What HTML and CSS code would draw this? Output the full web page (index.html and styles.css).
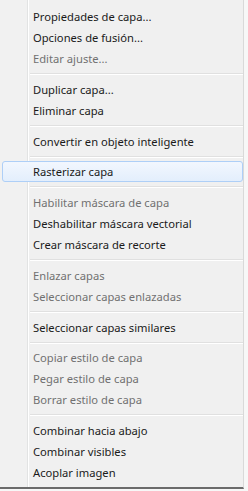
FILE: index.html
```html
<!DOCTYPE html>
<html lang="es">
<head>
<meta charset="utf-8">
<title>Menú contextual de capa</title>
<link rel="stylesheet" href="styles.css">
</head>
<body>
<div class="menu">
  <div class="item">Propiedades de capa...</div>
  <div class="item">Opciones de fusión...</div>
  <div class="item disabled">Editar ajuste...</div>
  <div class="sep"></div>
  <div class="item">Duplicar capa...</div>
  <div class="item">Eliminar capa</div>
  <div class="sep"></div>
  <div class="item">Convertir en objeto inteligente</div>
  <div class="sep"></div>
  <div class="item hover">Rasterizar capa</div>
  <div class="sep"></div>
  <div class="item disabled">Habilitar máscara de capa</div>
  <div class="item">Deshabilitar máscara vectorial</div>
  <div class="item">Crear máscara de recorte</div>
  <div class="sep"></div>
  <div class="item disabled">Enlazar capas</div>
  <div class="item disabled">Seleccionar capas enlazadas</div>
  <div class="sep"></div>
  <div class="item">Seleccionar capas similares</div>
  <div class="sep"></div>
  <div class="item disabled">Copiar estilo de capa</div>
  <div class="item disabled">Pegar estilo de capa</div>
  <div class="item disabled">Borrar estilo de capa</div>
  <div class="sep"></div>
  <div class="item">Combinar hacia abajo</div>
  <div class="item">Combinar visibles</div>
  <div class="item">Acoplar imagen</div>
</div>
</body>
</html>
```
FILE: styles.css
```css
html, body {
  margin: 0;
  padding: 0;
  background: #f7f7f7;
}

.menu {
  width: 244px;
  height: 489px;
  box-sizing: border-box;
  padding: 6px 0 4px 0;
  display: flex;
  flex-direction: column;
  background: linear-gradient(to right, #f1f1f1 0, #f1f1f1 27px, #e2e3e3 27px, #e2e3e3 28px, #ffffff 28px, #ffffff 29px, #f0f0f0 29px);
  border-right: 1px solid #d9d9d9;
  border-bottom: 2px solid #6b6b6b;
  font-family: "Noto Sans", "Open Sans", sans-serif;
  font-size: 11.2px;
  color: #1a1a1a;
}

.item {
  height: 21px;
  line-height: 21px;
  padding-left: 33px;
  box-sizing: border-box;
  white-space: nowrap;
}

.item.disabled {
  color: #707070;
}

.item.hover {
  margin: 0 0 0 2px;
  padding-left: 30px;
  line-height: 19px;
  border: 1px solid #aecff7;
  border-radius: 3px;
  background: linear-gradient(to bottom, #f2f7fe, #e3eefc);
}

.sep {
  height: 10px;
  margin-left: 30px;
  background: linear-gradient(to bottom, transparent 4px, #e0e0e0 4px, #e0e0e0 5px, #ffffff 5px, #ffffff 6px, transparent 6px);
}
```
